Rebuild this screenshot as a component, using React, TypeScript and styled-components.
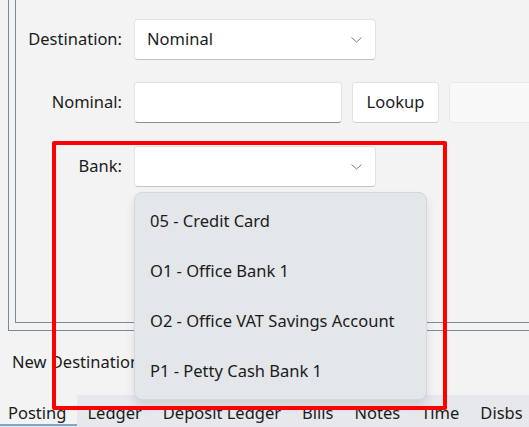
import React from "react";
import styled, { createGlobalStyle } from "styled-components";

const GlobalStyle = createGlobalStyle`
  html, body {
    margin: 0;
    padding: 0;
    background: #f3f3f3;
    overflow: hidden;
  }
  body {
    font-family: "Noto Sans", "Open Sans", sans-serif;
    color: #1b1b1b;
  }
`;

const Page = styled.div`
  position: relative;
  width: 529px;
  height: 427px;
  display: flex;
  flex-direction: column;
  overflow: hidden;
`;

const OuterGroup = styled.div`
  margin-left: 8px;
  border-left: 1px solid #7d8b99;
  border-bottom: 1px solid #7d8b99;
  padding: 0 0 7px 6px;
`;

const InnerGroup = styled.div`
  border-left: 1px solid #7d8b99;
  border-bottom: 1px solid #7d8b99;
  height: 323px;
  box-sizing: border-box;
`;

const Form = styled.div`
  display: flex;
  flex-direction: column;
  padding-top: 19px;
`;

const Row = styled.div<{ $top?: number }>`
  display: flex;
  align-items: center;
  gap: 10px;
  margin-top: ${({ $top }) => $top ?? 0}px;
`;

const Label = styled.label`
  flex-shrink: 0;
  width: 106px;
  text-align: right;
  font-size: 16.5px;
  margin-right: 2px;
  padding-bottom: 2px;
  white-space: nowrap;
`;

const Field = styled.div<{ $width: number; $disabled?: boolean }>`
  position: relative;
  box-sizing: border-box;
  width: ${({ $width }) => $width}px;
  height: 41px;
  display: flex;
  align-items: center;
  padding: 0 12px 2px;
  font-size: 16.5px;
  border-radius: 4px;
  background: ${({ $disabled }) => ($disabled ? "#f8f8f8" : "#ffffff")};
  border: 1px solid ${({ $disabled }) => ($disabled ? "#e9e9e9" : "#e3e3e3")};
  border-bottom-color: ${({ $disabled }) => ($disabled ? "#e9e9e9" : "#c4c4c4")};
  flex-shrink: 0;
`;

const TextBox = styled(Field)`
  border-bottom: 1px solid #8e8e8e;
`;

const Chevron = styled.svg`
  position: absolute;
  right: 13px;
  top: 50%;
  margin-top: -3px;
`;

const Button = styled.button`
  box-sizing: border-box;
  height: 41px;
  width: 87px;
  border-radius: 4px;
  background: #ffffff;
  border: 1px solid #e3e3e3;
  border-bottom-color: #cfcfcf;
  font-family: inherit;
  font-size: 16.5px;
  color: #1b1b1b;
  padding: 0 0 2px;
  flex-shrink: 0;
`;

const Popup = styled.div`
  position: absolute;
  top: calc(100% + 6px);
  left: -1px;
  width: 293px;
  box-sizing: border-box;
  padding: 3px 0;
  background: #e4e7ea;
  border: 1px solid #d2d8df;
  border-radius: 8px;
  box-shadow: 0 6px 10px rgba(0, 0, 0, 0.1);
  z-index: 5;
`;

const Option = styled.div`
  height: 50px;
  display: flex;
  align-items: center;
  padding: 0 0 2px 15px;
  box-sizing: border-box;
  font-size: 16.5px;
  white-space: nowrap;
`;

const Footer = styled.div`
  padding: 19px 0 0 12px;
  height: 64px;
  box-sizing: border-box;
  font-size: 16.5px;
  white-space: nowrap;
  flex-shrink: 0;
`;

const TabBar = styled.div`
  height: 34px;
  flex-shrink: 0;
  display: flex;
  align-items: stretch;
  background: #e6e8eb;
`;

const Tab = styled.div<{ $active?: boolean }>`
  display: flex;
  align-items: flex-start;
  padding: 6px 11px 0 ${({ $active }) => ($active ? 8 : 10)}px;
  font-size: 16.5px;
  background: ${({ $active }) => ($active ? "#f3f3f3" : "transparent")};
  border-bottom: 2px solid ${({ $active }) => ($active ? "#7fa7c9" : "transparent")};
  margin-bottom: 3px;
  white-space: nowrap;
`;

const Highlight = styled.div`
  position: absolute;
  left: 52px;
  top: 141px;
  width: 395px;
  height: 269px;
  box-sizing: border-box;
  border: 4px solid #ff0000;
  border-radius: 2px;
  pointer-events: none;
  z-index: 10;
`;

const banks = [
  "05 - Credit Card",
  "O1 - Office Bank 1",
  "O2 - Office VAT Savings Account",
  "P1 - Petty Cash Bank 1",
];

const tabs = ["Posting", "Ledger", "Deposit Ledger", "Bills", "Notes", "Time", "Disbs"];

const Caret = () => (
  <Chevron width="11" height="6" viewBox="0 0 11 6">
    <polyline points="0.5,0.5 5.5,5 10.5,0.5" fill="none" stroke="#7a7f86" strokeWidth="1" />
  </Chevron>
);

export default function App() {
  return (
    <Page>
      <GlobalStyle />
      <OuterGroup>
        <InnerGroup>
          <Form>
            <Row>
              <Label>Destination:</Label>
              <Field $width={242}>
                Nominal
                <Caret />
              </Field>
            </Row>
            <Row $top={22}>
              <Label>Nominal:</Label>
              <TextBox $width={208} />
              <Button>Lookup</Button>
              <Field $width={120} $disabled />
            </Row>
            <Row $top={23}>
              <Label>Bank:</Label>
              <Field $width={242}>
                <Caret />
                <Popup>
                  {banks.map((b) => (
                    <Option key={b}>{b}</Option>
                  ))}
                </Popup>
              </Field>
            </Row>
          </Form>
        </InnerGroup>
      </OuterGroup>
      <Footer>New Destination:</Footer>
      <TabBar>
        {tabs.map((t, i) => (
          <Tab key={t} $active={i === 0}>
            {t}
          </Tab>
        ))}
      </TabBar>
      <Highlight />
    </Page>
  );
}
